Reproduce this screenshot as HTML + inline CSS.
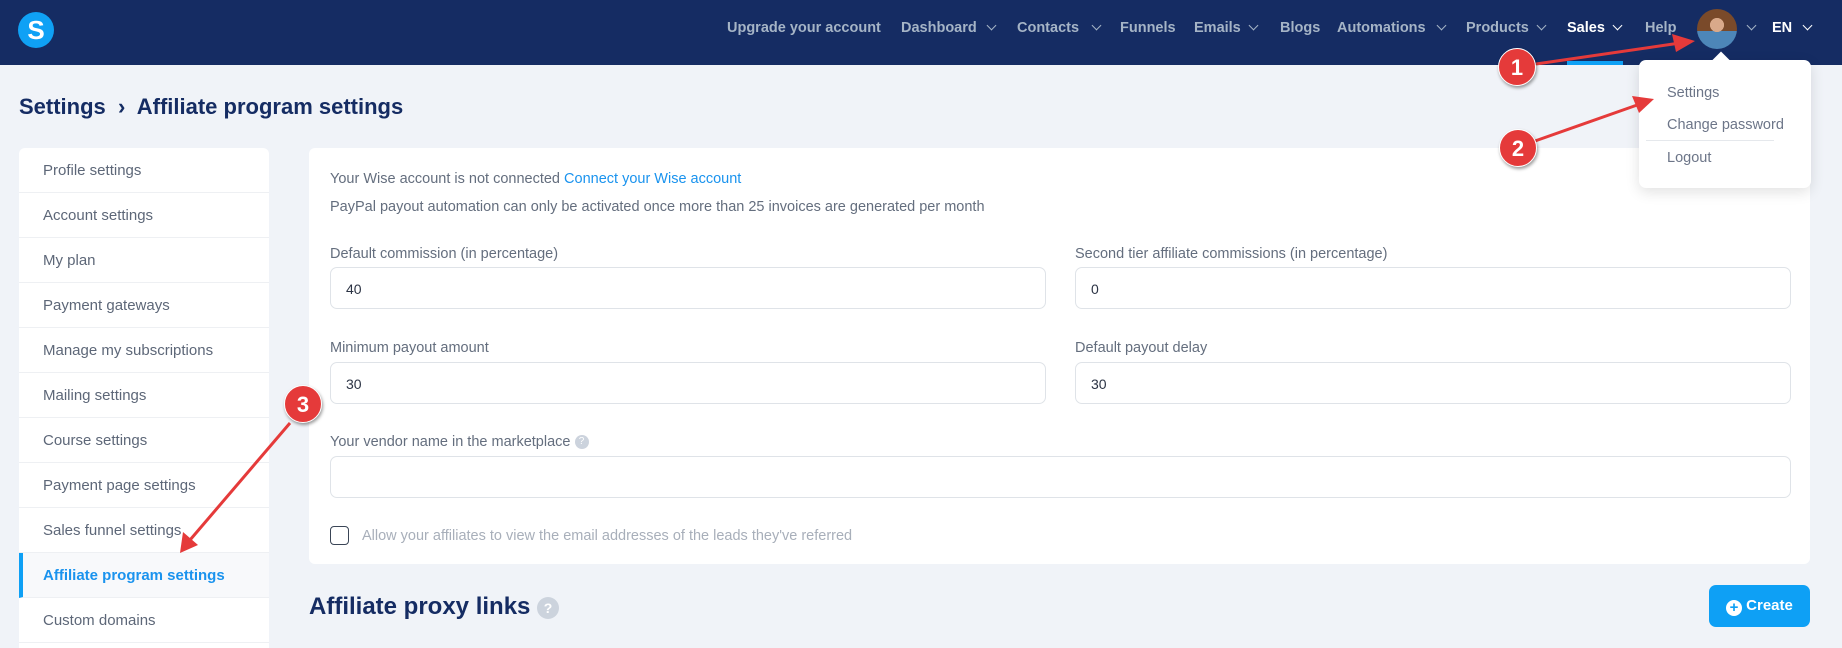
<!DOCTYPE html>
<html><head><meta charset="utf-8"><style>
*{box-sizing:border-box;margin:0;padding:0}
body{width:1842px;height:633px;overflow:hidden;background:#f0f3f8;font-family:"Liberation Sans",sans-serif;position:relative}
.hdr{position:absolute;left:0;top:0;width:1842px;height:65px;background:#152c63}
.nav{position:absolute;top:20px;font-size:14.5px;font-weight:bold;color:#a5b4c6;white-space:nowrap}
.chev{position:absolute;top:22px;width:7px;height:7px;border-right:1.5px solid #a5b4c6;border-bottom:1.5px solid #a5b4c6;transform:rotate(45deg)}
.abs{position:absolute}
.side{position:absolute;left:19px;top:148px;width:250px;height:500px;background:#fff;border-radius:6px 6px 0 0}
.si{height:45px;border-bottom:1px solid #eef0f3;font-size:15px;color:#5d6778;padding:14px 0 0 24px}
.si.act{background:#f8f9fb;border-left:4px solid #0ea0f5;color:#1a93ee;font-weight:bold;padding-left:20px}
.card{position:absolute;left:309px;top:148px;width:1501px;height:416px;background:#fff;border-radius:6px}
.t{position:absolute;font-size:14.5px;color:#646e7e;white-space:nowrap}
.inp{position:absolute;height:42px;border:1px solid #dfe3e8;border-radius:7px;font-size:14px;color:#2b3344;padding:13px 0 0 15px}
.badge{position:absolute;width:38px;height:38px;border-radius:50%;background:#e53a3a;color:#fff;font-weight:bold;font-size:22px;text-align:center;line-height:38px;box-shadow:1px 2px 3px rgba(0,0,0,.4);border:1px solid #fff}
</style></head><body>
<div class="hdr"></div>
<div class="abs" style="left:18px;top:12px;width:36px;height:36px;border-radius:50%;background:#0fa1f5;color:#fff;font-weight:bold;font-size:26px;text-align:center;line-height:36px">S</div>
<div class="nav" style="left:727px">Upgrade your account</div>
<div class="nav" style="left:901px">Dashboard</div><div class="chev" style="left:988px"></div>
<div class="nav" style="left:1017px">Contacts</div><div class="chev" style="left:1093px"></div>
<div class="nav" style="left:1120px">Funnels</div>
<div class="nav" style="left:1194px">Emails</div><div class="chev" style="left:1250px"></div>
<div class="nav" style="left:1280px">Blogs</div>
<div class="nav" style="left:1337px">Automations</div><div class="chev" style="left:1438px"></div>
<div class="nav" style="left:1466px">Products</div><div class="chev" style="left:1538px"></div>
<div class="nav" style="left:1567px;color:#fff">Sales</div><div class="chev" style="left:1614px;border-color:#fff"></div>
<div class="nav" style="left:1645px">Help</div>
<div class="abs" style="left:1567px;top:61px;width:56px;height:4px;background:#0ea0f5"></div>
<div class="abs" style="left:1697px;top:9px;width:40px;height:40px;border-radius:50%;background:radial-gradient(circle at 50% 40%,#d9a98a 0 22%,transparent 23%),linear-gradient(#7a4a2a 0 55%,#4d86b8 55%)"></div>
<div class="chev" style="left:1748px"></div>
<div class="nav" style="left:1772px;color:#fff">EN</div><div class="chev" style="left:1804px;border-color:#fff"></div>

<div class="abs" style="left:19px;top:94px;font-size:22px;font-weight:bold;color:#152c63">Settings &nbsp;›&nbsp; Affiliate program settings</div>

<div class="side">
<div class="si">Profile settings</div><div class="si">Account settings</div><div class="si">My plan</div><div class="si">Payment gateways</div><div class="si">Manage my subscriptions</div><div class="si">Mailing settings</div><div class="si">Course settings</div><div class="si">Payment page settings</div><div class="si">Sales funnel settings</div><div class="si act">Affiliate program settings</div><div class="si">Custom domains</div>
</div>

<div class="card"></div>
<div class="t" style="left:330px;top:171px">Your Wise account is not connected <span style="color:#1a93ee">Connect your Wise account</span></div>
<div class="t" style="left:330px;top:199px">PayPal payout automation can only be activated once more than 25 invoices are generated per month</div>
<div class="t" style="left:330px;top:246px">Default commission (in percentage)</div>
<div class="t" style="left:1075px;top:246px">Second tier affiliate commissions (in percentage)</div>
<div class="inp" style="left:330px;top:267px;width:716px">40</div>
<div class="inp" style="left:1075px;top:267px;width:716px">0</div>
<div class="t" style="left:330px;top:340px">Minimum payout amount</div>
<div class="t" style="left:1075px;top:340px">Default payout delay</div>
<div class="inp" style="left:330px;top:362px;width:716px">30</div>
<div class="inp" style="left:1075px;top:362px;width:716px">30</div>
<div class="t" style="left:330px;top:434px">Your vendor name in the marketplace <span style="display:inline-block;width:14px;height:14px;border-radius:50%;background:#ccd3dd;color:#fff;font-size:10px;text-align:center;line-height:14px;vertical-align:middle">?</span></div>
<div class="inp" style="left:330px;top:456px;width:1461px"></div>
<div class="abs" style="left:330px;top:526px;width:19px;height:19px;border:1.5px solid #3a4556;border-radius:4px"></div>
<div class="t" style="left:362px;top:528px;color:#a8afba">Allow your affiliates to view the email addresses of the leads they've referred</div>

<div class="abs" style="left:309px;top:593px;font-size:24px;font-weight:bold;color:#152c63">Affiliate proxy links <span style="display:inline-block;width:22px;height:22px;border-radius:50%;background:#ccd3dd;color:#fff;font-size:14px;text-align:center;line-height:22px;vertical-align:middle">?</span></div>
<div class="abs" style="left:1709px;top:585px;width:101px;height:42px;border-radius:7px;background:#0ea0f5;color:#fff;font-weight:bold;font-size:15px;padding:12px 0 0 17px"><span style="display:inline-block;width:16px;height:16px;border-radius:50%;background:#fff;color:#0ea0f5;text-align:center;line-height:16px;font-size:15px;vertical-align:-2px">+</span> Create</div>

<div class="abs" style="left:1639px;top:60px;width:172px;height:128px;background:#fff;border-radius:7px;box-shadow:0 4px 14px rgba(0,0,0,.12)"></div>
<div class="abs" style="left:1715px;top:54px;width:12px;height:12px;background:#fff;transform:rotate(45deg)"></div>
<div class="t" style="left:1667px;top:85px;color:#6c7588">Settings</div>
<div class="t" style="left:1667px;top:117px;color:#6c7588">Change password</div>
<div class="abs" style="left:1646px;top:140px;width:128px;height:1px;background:#e5e8ec"></div>
<div class="t" style="left:1667px;top:150px;color:#6c7588">Logout</div>

<svg class="abs" style="left:0;top:0" width="1842" height="633">
<g stroke="#e53a3a" stroke-width="3" fill="#e53a3a">
<line x1="1536" y1="64" x2="1680" y2="43"/><polygon points="1695,41 1672,34 1676,52" stroke="none"/>
<line x1="1535" y1="141" x2="1640" y2="104"/><polygon points="1654,99 1632,96 1639,113" stroke="none"/>
<line x1="290" y1="423" x2="190" y2="540"/><polygon points="180,553 183,532 198,545" stroke="none"/>
</g></svg>
<div class="badge" style="left:1498px;top:48px">1</div>
<div class="badge" style="left:1499px;top:129px">2</div>
<div class="badge" style="left:284px;top:385px">3</div>
</body></html>
